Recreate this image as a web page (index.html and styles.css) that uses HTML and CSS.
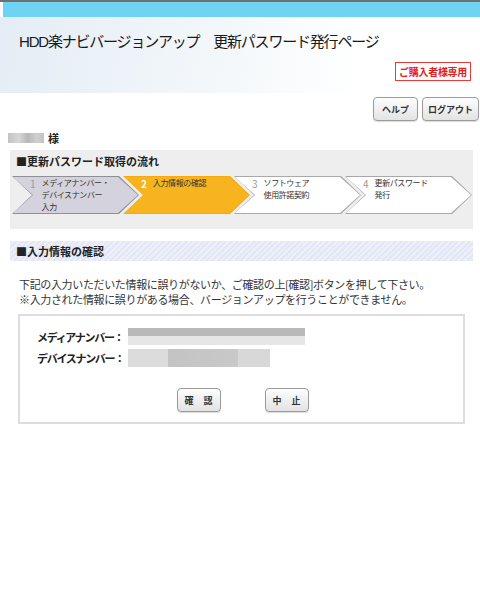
FILE: index.html
```html
<!DOCTYPE html>
<html lang="ja">
<head>
<meta charset="UTF-8">
<title>HDD楽ナビバージョンアップ 更新パスワード発行ページ</title>
<link rel="stylesheet" href="styles.css">
</head>
<body>
<div class="topline"></div>
<div class="topbar"></div>
<div class="header">
    <h1>HDD楽ナビバージョンアップ　更新パスワード発行ページ</h1>
    <div class="owner"><span class="owner-badge">ご購入者様専用</span></div>
</div>
<div class="toolbar">
    <button class="btn">ヘルプ</button>
    <button class="btn btn-wide">ログアウト</button>
</div>
<div class="user"><span class="blur blur-name"></span><span class="sama">様</span></div>

<div class="flow">
    <p class="flow-title">■更新パスワード取得の流れ</p>
    <div class="steps">
        <div class="step step-done"><div class="step-in"><span class="num">1</span><span class="label">メディアナンバー・<br>デバイスナンバー<br>入力</span></div></div>
        <div class="step step-now"><div class="step-in"><span class="num">2</span><span class="label">入力情報の確認</span></div></div>
        <div class="step"><div class="step-in"><span class="num">3</span><span class="label">ソフトウェア<br>使用許諾契約</span></div></div>
        <div class="step"><div class="step-in"><span class="num">4</span><span class="label">更新パスワード<br>発行</span></div></div>
    </div>
</div>

<h2 class="section">■入力情報の確認</h2>
<p class="note">下記の入力いただいた情報に誤りがないか、ご確認の上[確認]ボタンを押して下さい。<br>※入力された情報に誤りがある場合、バージョンアップを行うことができません。</p>

<div class="confirm">
    <div class="row"><span class="key">メディアナンバー：</span><span class="blur blur-media"></span></div>
    <div class="row"><span class="key">デバイスナンバー：</span><span class="blur blur-device"></span></div>
    <div class="actions">
        <button class="btn btn-small">確 認</button>
        <button class="btn btn-small">中 止</button>
    </div>
</div>
</body>
</html>
```

FILE: styles.css
```css
body {
    margin: 0;
    font-family: "Noto Sans CJK JP", "Liberation Sans", sans-serif;
    font-size: 11px;
    color: #222;
    background: #fff;
}

.topline {
    height: 2px;
    background: #6f6f6f;
}

.topbar {
    height: 15px;
    margin-left: 3px;
    background: #6fd3f4;
}

.header {
    height: 62px;
    padding: 14px 9px 0 19px;
    background: linear-gradient(100deg, #e4edf5 0%, #f3f7fa 45%, #ffffff 75%);
    background-color: #fff;
}

.header h1 {
    margin: 0;
    font-family: "Liberation Sans", "Noto Sans CJK JP", sans-serif;
    font-size: 15px;
    letter-spacing: -1.2px;
    font-weight: normal;
    line-height: 22px;
    color: #1a1a1a;
}

.owner {
    display: flex;
    justify-content: flex-end;
    margin-top: 9px;
}

.owner-badge {
    border: 1px solid #e53b3b;
    background: #fff;
    color: #e02020;
    font-weight: bold;
    font-size: 10px;
    letter-spacing: -0.3px;
    line-height: 17px;
    padding: 0 3px;
}

.toolbar {
    display: flex;
    justify-content: flex-end;
    gap: 4px;
    padding: 4px 1px 0 0;
}

.btn {
    height: 24px;
    width: 45px;
    padding: 0;
    border: 1px solid #9b9b9b;
    border-radius: 4px;
    background: linear-gradient(to bottom, #fdfdfd, #e3e3e3);
    box-shadow: 0 1px 1px rgba(0, 0, 0, 0.15);
    font-family: "Noto Sans CJK JP", sans-serif;
    font-size: 9px;
    font-weight: bold;
    color: #333;
}

.btn-wide {
    width: 57px;
}

.user {
    display: flex;
    align-items: center;
    gap: 4px;
    padding: 10px 0 0 8px;
    height: 14px;
}

.blur {
    display: inline-block;
    background: linear-gradient(to right, #c4c4c4, #d6d6d6 30%, #b8b8b8 55%, #d0d0d0 80%, #c2c2c2);
}

.blur-name {
    width: 36px;
    height: 10px;
}

.sama {
    font-weight: bold;
}

.flow {
    margin: 5px 7px 0 10px;
    height: 79px;
    background: #eeeeee;
    padding: 0 0 0 2px;
}

.flow-title {
    margin: 0;
    padding: 3px 0 0 4px;
    font-weight: bold;
    line-height: 17px;
}

.steps {
    display: flex;
    margin-top: 6px;
}

.step {
    width: 127px;
    height: 38px;
    margin-left: -16px;
    background: #a9a9a9;
    clip-path: polygon(0 0, calc(100% - 20px) 0, 100% 50%, calc(100% - 20px) 100%, 0 100%, 20px 50%);
}

.step:first-child {
    margin-left: 0;
}

.step-in {
    height: 36px;
    margin: 1px;
    background: #fff;
    clip-path: polygon(0 0, calc(100% - 20px) 0, 100% 50%, calc(100% - 20px) 100%, 0 100%, 20px 50%);
    display: flex;
    align-items: flex-start;
    gap: 6px;
    padding: 0 0 0 17px;
    box-sizing: border-box;
    font-size: 8px;
    letter-spacing: -0.4px;
    line-height: 12px;
    color: #333;
    white-space: nowrap;
}

.step-done {
    background: #8f8f99;
}

.step-done .step-in {
    background: #d4d2dc;
}

.step-now {
    background: #f3ab10;
}

.step-now .step-in {
    background: #f7b41e;
}

.num {
    color: #999;
    font-size: 10px;
    line-height: 14px;
    letter-spacing: 0;
}

.step-now .num {
    color: #fff;
    font-weight: bold;
}

.section {
    margin: 12px 7px 0 10px;
    padding: 0 0 0 6px;
    height: 20px;
    line-height: 20px;
    font-size: 11px;
    background: repeating-linear-gradient(135deg, #e3e6f4 0, #e3e6f4 2px, #eef0f9 2px, #eef0f9 4px);
}

.note {
    margin: 16px 0 0 19px;
    line-height: 15px;
    letter-spacing: -0.35px;
    color: #333;
}

.confirm {
    margin: 7px 15px 0 18px;
    height: 110px;
    border: 2px solid #dddddd;
    padding: 10px 0 0 17px;
    box-sizing: border-box;
}

.row {
    display: flex;
    align-items: center;
    height: 21px;
}

.key {
    width: 91px;
    font-weight: bold;
    letter-spacing: -1.3px;
    white-space: nowrap;
}

.blur-media {
    width: 177px;
    height: 17px;
    background: linear-gradient(to bottom, #b9b9b9 50%, #e6e6e6 50%);
}

.blur-device {
    width: 142px;
    height: 18px;
    background: linear-gradient(to right, #dcdcdc 40px, #c3c3c3 40px, #c9c9c9 110px, #d8d8d8 110px);
}

.actions {
    display: flex;
    justify-content: center;
    gap: 44px;
    margin: 20px 0 0 -15px;
}

.btn-small {
    width: 44px;
    height: 24px;
    letter-spacing: 4px;
    text-indent: 4px;
}
```
